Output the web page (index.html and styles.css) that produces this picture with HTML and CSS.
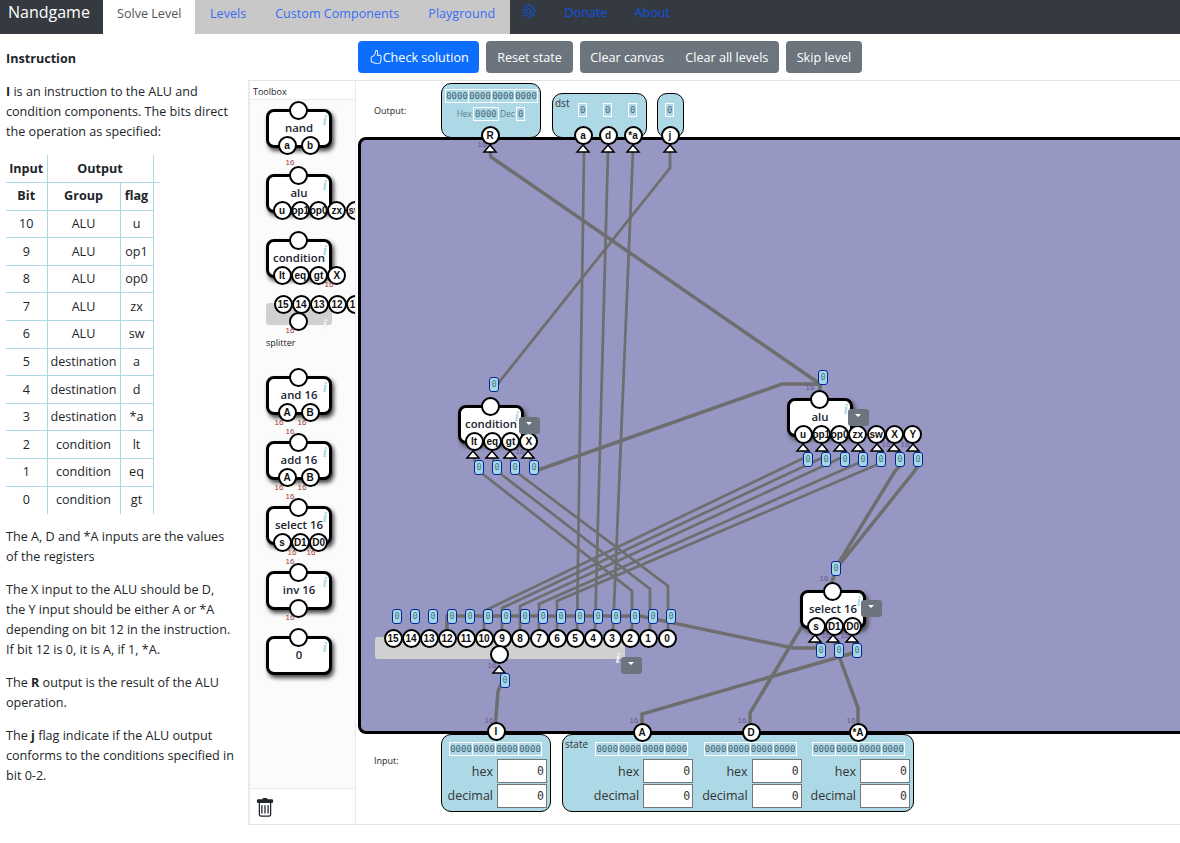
FILE: index.html
```html
<!DOCTYPE html>
<html lang="en">
<head>
    <meta charset="UTF-8">
    <title>Nandgame</title>
    <link rel="stylesheet" href="styles.css">
</head>
<body>
    <nav class="topbar">
        <a class="brand" href="#">Nandgame</a>
        <ul class="tabs">
            <li class="tab active"><a href="#">Solve Level</a></li>
            <li class="tab"><a href="#">Levels</a></li>
            <li class="tab"><a href="#">Custom Components</a></li>
            <li class="tab"><a href="#">Playground</a></li>
        </ul>
        <a class="navlink gear" href="#" aria-label="Settings">
            <svg viewBox="0 0 16 16" width="14" height="14" fill="currentColor">
                <path d="M8 4.754a3.246 3.246 0 1 0 0 6.492 3.246 3.246 0 0 0 0-6.492zM5.754 8a2.246 2.246 0 1 1 4.492 0 2.246 2.246 0 0 1-4.492 0z"/>
                <path d="M9.796 1.343c-.527-1.79-3.065-1.79-3.592 0l-.094.319a.873.873 0 0 1-1.255.52l-.292-.16c-1.64-.892-3.433.902-2.54 2.541l.159.292a.873.873 0 0 1-.52 1.255l-.319.094c-1.79.527-1.79 3.065 0 3.592l.319.094a.873.873 0 0 1 .52 1.255l-.16.292c-.892 1.64.901 3.434 2.541 2.54l.292-.159a.873.873 0 0 1 1.255.52l.094.319c.527 1.79 3.065 1.79 3.592 0l.094-.319a.873.873 0 0 1 1.255-.52l.292.16c1.64.893 3.434-.902 2.54-2.541l-.159-.292a.873.873 0 0 1 .52-1.255l.319-.094c1.79-.527 1.79-3.065 0-3.592l-.319-.094a.873.873 0 0 1-.52-1.255l.16-.292c.893-1.64-.902-3.433-2.541-2.54l-.292.159a.873.873 0 0 1-1.255-.52l-.094-.319zm-2.633.283c.246-.835 1.428-.835 1.674 0l.094.319a1.873 1.873 0 0 0 2.693 1.115l.291-.16c.764-.415 1.6.42 1.184 1.185l-.159.292a1.873 1.873 0 0 0 1.116 2.692l.318.094c.835.246.835 1.428 0 1.674l-.319.094a1.873 1.873 0 0 0-1.115 2.693l.16.291c.415.764-.42 1.6-1.185 1.184l-.291-.159a1.873 1.873 0 0 0-2.693 1.116l-.094.318c-.246.835-1.428.835-1.674 0l-.094-.319a1.873 1.873 0 0 0-2.692-1.115l-.292.16c-.764.415-1.6-.42-1.184-1.185l.159-.291A1.873 1.873 0 0 0 1.945 8.93l-.319-.094c-.835-.246-.835-1.428 0-1.674l.319-.094A1.873 1.873 0 0 0 3.06 4.377l-.16-.292c-.415-.764.42-1.6 1.185-1.184l.292.159a1.873 1.873 0 0 0 2.692-1.115l.094-.319z"/>
            </svg>
        </a>
        <a class="navlink" href="#">Donate</a>
        <a class="navlink" href="#">About</a>
    </nav>

    <main class="page">
        <aside class="instructions">
            <h1>Instruction</h1>
            <p><b>I</b> is an instruction to the ALU and condition components. The bits direct the operation as specified:</p>
            <table>
                <colgroup>
                    <col class="col-bit">
                    <col class="col-group">
                    <col class="col-flag">
                </colgroup>
                <thead>
                    <tr><th>Input</th><th colspan="2" class="output-head">Output</th></tr>
                    <tr><th>Bit</th><th>Group</th><th>flag</th></tr>
                </thead>
                <tbody>
                    <tr><td>10</td><td>ALU</td><td>u</td></tr>
                    <tr><td>9</td><td>ALU</td><td>op1</td></tr>
                    <tr><td>8</td><td>ALU</td><td>op0</td></tr>
                    <tr><td>7</td><td>ALU</td><td>zx</td></tr>
                    <tr><td>6</td><td>ALU</td><td>sw</td></tr>
                    <tr><td>5</td><td>destination</td><td>a</td></tr>
                    <tr><td>4</td><td>destination</td><td>d</td></tr>
                    <tr><td>3</td><td>destination</td><td>*a</td></tr>
                    <tr><td>2</td><td>condition</td><td>lt</td></tr>
                    <tr><td>1</td><td>condition</td><td>eq</td></tr>
                    <tr><td>0</td><td>condition</td><td>gt</td></tr>
                </tbody>
            </table>
            <p>The A, D and *A inputs are the values of the registers</p>
            <p>The X input to the ALU should be D, the Y input should be either A or *A depending on bit 12 in the instruction. If bit 12 is 0, it is A, if 1, *A.</p>
            <p>The <b>R</b> output is the result of the ALU operation.</p>
            <p>The <b>j</b> flag indicate if the ALU output conforms to the conditions specified in bit 0-2.</p>
        </aside>

        <section class="workspace">
            <div class="toolbar">
                <button class="btn primary">
                    <svg viewBox="0 0 16 16" width="14" height="14" fill="currentColor"><path d="M8.864.046C7.908-.193 7.02.53 6.956 1.466c-.072 1.051-.23 2.016-.428 2.59-.125.36-.479 1.013-1.04 1.639-.557.623-1.282 1.178-2.131 1.41C2.685 7.288 2 7.87 2 8.72v4.001c0 .845.682 1.464 1.448 1.545 1.07.114 1.564.415 2.068.723l.048.03c.272.165.578.348.97.484.397.136.861.217 1.466.217h3.5c.937 0 1.599-.477 1.934-1.064a1.86 1.86 0 0 0 .254-.912c0-.152-.023-.312-.077-.464.201-.263.38-.578.488-.901.11-.33.172-.762.004-1.149.069-.13.12-.269.159-.403.077-.27.113-.568.113-.857 0-.288-.036-.585-.113-.856a2.144 2.144 0 0 0-.138-.362 1.9 1.9 0 0 0 .234-1.734c-.206-.592-.682-1.1-1.2-1.272-.847-.282-1.803-.276-2.516-.211a9.84 9.84 0 0 0-.443.05 9.365 9.365 0 0 0-.062-4.509A1.38 1.38 0 0 0 9.125.111L8.864.046zM11.5 14.721H8c-.51 0-.863-.069-1.14-.164-.281-.097-.506-.228-.776-.393l-.04-.024c-.555-.339-1.198-.731-2.49-.868-.333-.036-.554-.29-.554-.55V8.72c0-.254.226-.543.62-.65 1.095-.3 1.977-.996 2.614-1.708.635-.71 1.064-1.475 1.238-1.978.243-.7.407-1.768.482-2.85.025-.362.36-.594.667-.518l.262.066c.16.04.258.143.288.255a8.34 8.34 0 0 1-.145 4.725.5.5 0 0 0 .595.644l.003-.001.014-.003.058-.014a8.908 8.908 0 0 1 1.036-.157c.663-.06 1.457-.054 2.11.164.175.058.45.3.57.65.107.308.087.67-.266 1.022l-.353.353.353.354c.043.043.105.141.154.315.048.167.075.37.075.581 0 .212-.027.414-.075.582-.05.174-.111.272-.154.315l-.353.353.353.354c.047.047.109.177.005.488a2.224 2.224 0 0 1-.505.805l-.353.353.353.354c.006.005.041.05.041.17a.866.866 0 0 1-.121.416c-.165.288-.503.56-1.066.56z"/></svg>Check solution
                </button>
                <button class="btn">Reset state</button>
                <div class="btn-group">
                    <button class="btn">Clear canvas</button>
                    <button class="btn">Clear all levels</button>
                </div>
                <button class="btn">Skip level</button>
            </div>

            <div class="editor">
                <div class="toolbox">
                    <div class="toolbox-title">Toolbox</div>
                    <div class="toolbox-list" id="toolbox-list"></div>
                    <div class="trash">
                        <svg viewBox="0 0 16 16" width="20" height="20" fill="currentColor">
                            <path d="M5.5 5.5A.5.5 0 0 1 6 6v6a.5.5 0 0 1-1 0V6a.5.5 0 0 1 .5-.5zm2.5 0a.5.5 0 0 1 .5.5v6a.5.5 0 0 1-1 0V6a.5.5 0 0 1 .5-.5zm3 .5a.5.5 0 0 0-1 0v6a.5.5 0 0 0 1 0V6z"/>
                            <path d="M14.5 3a1 1 0 0 1-1 1H13v9a2 2 0 0 1-2 2H5a2 2 0 0 1-2-2V4h-.5a1 1 0 0 1-1-1V2a1 1 0 0 1 1-1H6a1 1 0 0 1 1-1h2a1 1 0 0 1 1 1h3.5a1 1 0 0 1 1 1v1zM4.118 4 4 4.059V13a1 1 0 0 0 1 1h6a1 1 0 0 0 1-1V4.059L11.882 4H4.118zM2.5 3V2h11v1h-11z"/>
                        </svg>
                    </div>
                </div>

                <div class="canvas" id="canvas">
                    <div class="panel"></div>
                    <svg class="wires" id="wires" viewBox="356 80 824 745" width="824" height="745">
                        <g class="wire thick">
                            <polyline points="490,150 491,156 820,383 820,392"/>
                            <polyline points="538,469 782,383 820,383"/>
                            <polyline points="447,630 447,615 640,615 793,647 821,647"/>
                            <polyline points="838,563 831,584"/>
                            <polyline points="900,465 895,470 838,563"/>
                            <polyline points="918,465 913,472 840,563"/>
                            <polyline points="839,655 858,707 858,728"/>
                            <polyline points="857,650 853,652 642,713 642,728"/>
                            <polyline points="810,612 750,712 750,728"/>
                            <polyline points="495,728 498,690 505,675"/>
                        </g>
                        <g class="wire">
                            <polyline points="584,150 577,630"/>
                            <polyline points="608,150 595,630"/>
                            <polyline points="633,150 613,630"/>
                            <polyline points="670,150 670,167 500,380 494,390"/>
                            <polyline points="484,630 484,610 808,455"/>
                            <polyline points="502,630 502,607 826,455"/>
                            <polyline points="520,630 520,605 845,455"/>
                            <polyline points="539,630 539,603 863,460"/>
                            <polyline points="557,630 557,600 881,462"/>
                            <polyline points="473,455 479,470 632,590 632,630"/>
                            <polyline points="492,455 497,470 650,588 650,630"/>
                            <polyline points="510,455 515,470 668,585 668,630"/>
                            <polyline points="528,455 534,462"/>
                            <polyline points="803,448 808,455"/>
                            <polyline points="822,448 826,455"/>
                            <polyline points="840,448 845,455"/>
                            <polyline points="858,448 863,455"/>
                            <polyline points="877,448 881,455"/>
                            <polyline points="894,448 900,455"/>
                            <polyline points="913,448 918,455"/>
                            <polyline points="815,640 821,647"/>
                            <polyline points="833,640 839,647"/>
                            <polyline points="852,640 857,647"/>
                        </g>
                    </svg>

                    <div class="io-label output-label">Output:</div>
                    <div class="io-label input-label">Input:</div>

                    <div class="box box-r">
                        <div class="bits"><span>0000</span><span>0000</span><span>0000</span><span>0000</span></div>
                        <div class="readout">Hex <span class="mono">0000</span> Dec <span class="mono">0</span></div>
                    </div>
                    <div class="box box-dst">
                        <span class="box-name">dst</span>
                        <span class="mono dst-a">0</span>
                        <span class="mono dst-d">0</span>
                        <span class="mono dst-sa">0</span>
                    </div>
                    <div class="box box-j"><span class="mono">0</span></div>

                    <div class="box box-i">
                        <div class="register">
                            <div class="bits"><span>0000</span><span>0000</span><span>0000</span><span>0000</span></div>
                            <label class="field">hex <input value="0"></label>
                            <label class="field">decimal <input value="0"></label>
                        </div>
                    </div>
                    <div class="box box-state">
                        <span class="box-name">state</span>
                        <div class="register">
                            <div class="bits"><span>0000</span><span>0000</span><span>0000</span><span>0000</span></div>
                            <label class="field">hex <input value="0"></label>
                            <label class="field">decimal <input value="0"></label>
                        </div>
                        <div class="register">
                            <div class="bits"><span>0000</span><span>0000</span><span>0000</span><span>0000</span></div>
                            <label class="field">hex <input value="0"></label>
                            <label class="field">decimal <input value="0"></label>
                        </div>
                        <div class="register">
                            <div class="bits"><span>0000</span><span>0000</span><span>0000</span><span>0000</span></div>
                            <label class="field">hex <input value="0"></label>
                            <label class="field">decimal <input value="0"></label>
                        </div>
                    </div>
                </div>
            </div>
        </section>
    </main>

    <script src="script.js"></script>
</body>
</html>
```

FILE: styles.css
```css
* {
    box-sizing: border-box;
}
body {
    margin: 0;
    font-family: "Open Sans", "Liberation Sans", sans-serif;
    font-size: 12.6px;
    color: #212529;
    background: #fff;
}
a {
    text-decoration: none;
}

/* top bar */
.topbar {
    display: flex;
    align-items: flex-start;
    height: 34px;
    background: #343a40;
}
.brand {
    width: 103px;
    padding-left: 8px;
    font-size: 16px;
    line-height: 25px;
    color: #fff;
}
.tabs {
    display: flex;
    margin: 0;
    padding: 0;
    list-style: none;
    background: #c8c8c8;
}
.tab a {
    display: block;
    height: 34px;
    padding: 0 14.5px;
    line-height: 27px;
    color: #3a6cf4;
}
.tab.active a {
    padding: 0 14px;
    background: #fff;
    color: #555;
}
.navlink {
    margin-left: 27px;
    line-height: 26px;
    color: #0d52e0;
}
.navlink.gear {
    display: block;
    height: 14px;
    margin-top: 4px;
    margin-left: 12px;
    margin-right: 2px;
    line-height: 14px;
}

/* instructions */
.page {
    display: grid;
    grid-template-columns: 248px 1fr;
}
.instructions {
    padding: 17px 12px 0 6px;
    line-height: 20px;
}
.instructions h1 {
    margin: 0 0 15px;
    font-size: 12.6px;
    font-weight: 700;
    line-height: 16px;
}
.instructions p {
    margin: 0 0 13px;
}
.instructions table {
    border-collapse: collapse;
    margin-bottom: 13px;
    width: 147px;
    table-layout: fixed;
}
.col-bit {
    width: 41px;
}
.col-group {
    width: 73px;
}
.col-flag {
    width: 33px;
}
.instructions th,
.instructions td {
    height: 27.6px;
    padding: 0;
    text-align: center;
    border: 1px solid #add8e6;
}
.instructions th:first-child,
.instructions td:first-child {
    border-left: 0;
}
.instructions tr:first-child th {
    border-top: 0;
}
.instructions tbody tr:last-child td {
    border-bottom: 0;
}
.output-head {
    position: relative;
}
.output-head::after {
    content: "";
    position: absolute;
    left: 100%;
    bottom: -1px;
    width: 7px;
    height: 1px;
    background: #add8e6;
}

/* workspace */
.toolbar {
    display: flex;
    gap: 7px;
    height: 46px;
    padding: 7px 0 0 110px;
}
.btn {
    height: 32px;
    padding: 0 10.7px;
    border: 0;
    border-radius: 4px;
    font: inherit;
    color: #fff;
    background: #6c757d;
}
.btn.primary {
    display: flex;
    align-items: center;
    background: #0d6efd;
}
.btn-group {
    display: flex;
}
.btn-group .btn:first-child {
    border-radius: 4px 0 0 4px;
}
.btn-group .btn:last-child {
    border-radius: 0 4px 4px 0;
}
.editor {
    display: flex;
    height: 745px;
    border-top: 1px solid #e4e4e4;
    border-bottom: 1px solid #e4e4e4;
}

/* toolbox */
.toolbox {
    display: flex;
    flex-direction: column;
    flex: none;
    width: 108px;
    border-left: 2px solid #ebebeb;
    border-right: 1px solid #ebebeb;
    background: #fbfbfb;
    overflow: hidden;
}
.toolbox-title {
    height: 19px;
    padding-left: 3px;
    font-size: 9px;
    line-height: 21px;
    background: #fff;
    border-bottom: 1px solid #ebebeb;
}
.toolbox-list {
    flex: 1;
    padding: 9px 0 0 16px;
}
.tool {
    height: 65px;
}
.tool.splitter-tool {
    height: 73px;
    margin-top: -1px;
}
.caption {
    margin-top: 12px;
    font-size: 9px;
    line-height: 12px;
}
.trash {
    height: 36px;
    padding: 9px 0 0 5px;
    background: #fff;
    border-top: 1px solid #ebebeb;
}

/* nodes */
.node {
    position: relative;
    width: 66px;
    height: 39px;
    border: 3px solid #000;
    border-radius: 8px;
    background: #fff;
    box-shadow: 2px 3px 4px #444;
    text-align: center;
    font-size: 11.4px;
    font-weight: 600;
    line-height: 31px;
    color: #1c2430;
}
.node.splitter {
    height: 22px;
    border: 0;
    border-radius: 3px;
    background: #d0d0d0;
    box-shadow: none;
}
.node.placed {
    position: absolute;
}
.info {
    position: absolute;
    top: 1px;
    right: 2px;
    font: italic bold 15px/14px "Liberation Serif", serif;
    color: #add8e6;
}
.node.splitter .info {
    top: auto;
    right: 5px;
    bottom: -6px;
    color: #f2f2f2;
}
.pin {
    position: absolute;
    width: 19px;
    height: 19px;
    margin: -9.5px 0 0 -9.5px;
    border: 2px solid #000;
    border-radius: 50%;
    background: #fff;
    text-align: center;
    font: bold 10px/15px "Liberation Sans", sans-serif;
    color: #111;
    white-space: nowrap;
}
/* pin names stick out of the circle and stay readable over the next pin */
.pin span {
    position: relative;
    z-index: 2;
    margin: 0 -6px;
}
.bus {
    position: absolute;
    z-index: 3;
    transform: translate(-50%, -50%);
    font: 8px/8px "Liberation Sans", sans-serif;
    color: #a03a3a;
}
.canvas .bus {
    color: #6d5689;
}
.value {
    position: absolute;
    z-index: 3;
    width: 10px;
    height: 15px;
    margin: -7.5px 0 0 -5px;
    border: 1px solid #0a1f9c;
    border-radius: 3px;
    background: #a3d9e6;
    text-align: center;
    font: 8.5px/13px "DejaVu Sans Mono", monospace;
    color: #4c7484;
}
.drop {
    position: absolute;
    z-index: 4;
    width: 21px;
    height: 17px;
    border-radius: 3px;
    background: #6c757d;
}
.drop::after {
    content: "";
    position: absolute;
    left: 7px;
    top: 5px;
    border: 3.5px solid transparent;
    border-top: 3.5px solid #fff;
}

/* canvas */
.canvas {
    position: relative;
    flex: 1;
    overflow: hidden;
}
.panel {
    position: absolute;
    left: 2px;
    top: 56px;
    width: 840px;
    height: 597px;
    border: 3px solid #000;
    border-radius: 8px;
    background: #9797c3;
}
.wires {
    position: absolute;
    left: 0;
    top: 0;
}
.wire {
    fill: none;
    stroke: #6e6e6e;
    stroke-width: 2.7;
}
.wire.thick {
    stroke-width: 3.5;
}
.wires .tri {
    fill: #fff;
    stroke: #000;
    stroke-width: 1.5;
}
.io-label {
    position: absolute;
    left: 18px;
    font-size: 9px;
}
.output-label {
    top: 23px;
}
.input-label {
    top: 673px;
}
.box {
    position: absolute;
    border: 1.5px solid #000;
    border-radius: 10px;
    background: #add8e6;
    color: #333;
}
.box-name {
    position: absolute;
    left: 2px;
    top: 2px;
    font-size: 10px;
    line-height: 14px;
}
.mono {
    display: inline-block;
    height: 14px;
    padding: 0 1px;
    border: 1px solid #fff;
    font: 9px/12px "DejaVu Sans Mono", monospace;
    color: #4c6a78;
}
.bits {
    display: flex;
    width: 93px;
    border: 1px solid #fff;
}
.bits span {
    flex: 1;
    border-right: 1px solid #fff;
    text-align: center;
    font: 9px/12px "DejaVu Sans Mono", monospace;
    color: #46626f;
}
.bits span:last-child {
    border-right: 0;
}
.readout {
    margin-top: 4px;
    text-align: center;
    font-size: 8.4px;
    line-height: 14px;
    word-spacing: -1px;
    color: #5c7c90;
}
.box-r {
    left: 85px;
    top: 2px;
    width: 100px;
    height: 55px;
    padding: 5px 3px;
}
.box-dst {
    left: 196px;
    top: 12px;
    width: 95px;
    height: 45px;
}
.box-dst .mono,
.box-j .mono {
    position: absolute;
    top: 9px;
}
.dst-a {
    left: 25px;
}
.dst-d {
    left: 50px;
}
.dst-sa {
    left: 75px;
}
.box-j {
    left: 301px;
    top: 12px;
    width: 27px;
    height: 45px;
}
.box-j .mono {
    left: 7px;
}
.box-i,
.box-state {
    display: flex;
    justify-content: flex-end;
    top: 653px;
    height: 78px;
    padding: 7px 3px 0 0;
}
.box-i {
    left: 85px;
    width: 110px;
}
.box-state {
    left: 206px;
    width: 352px;
}
.register {
    display: flex;
    flex-direction: column;
    align-items: flex-end;
    flex: none;
    width: 108.4px;
}
.register .bits {
    margin: 0 5px 3px 0;
}
.field {
    display: flex;
    align-items: center;
    justify-content: flex-end;
    gap: 4px;
    height: 24.5px;
    font-size: 12.5px;
}
.field input {
    width: 50px;
    height: 24px;
    padding: 0 2px;
    border: 1px solid #767676;
    background: #fff;
    text-align: right;
    font: 11.5px "DejaVu Sans Mono", monospace;
    color: #333;
}
```

FILE: script.js
```js
// canvas coordinates below are taken from the page, this is the canvas corner
const OX = 356;
const OY = 81;
const SVG_NS = 'http://www.w3.org/2000/svg';

function make(cls, text) {
    const el = document.createElement('div');
    el.className = cls;
    if (text !== undefined) el.textContent = text;
    return el;
}

function place(el, x, y) {
    el.style.left = x + 'px';
    el.style.top = y + 'px';
    return el;
}

function makePin(name) {
    const pin = make('pin');
    if (name) {
        const label = document.createElement('span');
        label.textContent = name;
        pin.appendChild(label);
    }
    return pin;
}

// input pins sit along the bottom edge of the box
function pinX(count, i) {
    if (count <= 2) return [18, 41][i];
    return 13 + i * 18.3;
}

function addNode(parent, opts) {
    const node = make('node' + (opts.cls ? ' ' + opts.cls : ''));
    node.append(opts.label || '');
    node.appendChild(make('info', 'i'));
    if (opts.out !== false) node.appendChild(place(makePin(), 29, -2));
    (opts.inputs || []).forEach(function(name, i) {
        node.appendChild(place(makePin(name), pinX(opts.inputs.length, i), 33));
    });
    if (opts.bottom) node.appendChild(place(makePin(), 29, 34));
    (opts.bus || []).forEach(function(b) {
        node.appendChild(place(make('bus', '16'), b[0] - 3, b[1] - 3));
    });
    parent.appendChild(node);
    return node;
}

function addSplitter(parent) {
    const node = make('node splitter');
    node.appendChild(make('info', 'i'));
    ['15', '14', '13', '12', '11'].forEach(function(name, i) {
        node.appendChild(place(makePin(name), 17 + i * 18, 1));
    });
    node.appendChild(place(makePin(), 32, 18));
    node.appendChild(place(make('bus', '16'), 24, 28));
    parent.appendChild(node);
}

const TOOLS = [
    { label: 'nand', inputs: ['a', 'b'] },
    { label: 'alu', inputs: ['u', 'op1', 'op0', 'zx', 'sw'], bus: [[24, -11]] },
    { label: 'condition', inputs: ['lt', 'eq', 'gt', 'X'], bus: [[63, 46]] },
    { splitter: true },
    { label: 'and 16', inputs: ['A', 'B'], bus: [[13, 47], [36, 47]] },
    { label: 'add 16', inputs: ['A', 'B'], bus: [[24, -9], [13, 47], [36, 47]] },
    { label: 'select 16', inputs: ['s', 'D1', 'D0'], bus: [[24, -9], [26, 47], [45, 47]] },
    { label: 'inv 16', bottom: true, bus: [[24, -9], [24, 47]] },
    { label: '0' }
];

const list = document.getElementById('toolbox-list');
TOOLS.forEach(function(tool) {
    if (tool.splitter) {
        const wrap = make('tool splitter-tool');
        addSplitter(wrap);
        wrap.appendChild(make('caption', 'splitter'));
        list.appendChild(wrap);
        return;
    }
    const wrap = make('tool');
    addNode(wrap, tool);
    list.appendChild(wrap);
});

// the circuit itself
const canvas = document.getElementById('canvas');
const wires = document.getElementById('wires');

function canvasPin(x, y, name) {
    canvas.appendChild(place(makePin(name), x - OX, y - OY));
}

function placeNode(x, y, opts) {
    opts.cls = 'placed';
    place(addNode(canvas, opts), x - OX, y - OY);
}

function drop(x, y) {
    canvas.appendChild(place(make('drop'), x - OX, y - OY));
}

function triangle(x, tip) {
    const tri = document.createElementNS(SVG_NS, 'polygon');
    tri.setAttribute('class', 'tri');
    tri.setAttribute('points', [x, tip, x - 6, tip + 7, x + 6, tip + 7].join(' '));
    wires.appendChild(tri);
}

function value(x, y) {
    canvas.appendChild(place(make('value', '0'), x - OX, y - OY));
}

function bus(x, y) {
    canvas.appendChild(place(make('bus', '16'), x - OX, y - OY));
}

[490, 583, 608, 633, 670].forEach(function(x) { triangle(x, 144); });
[473, 492, 510, 528].forEach(function(x) { triangle(x, 450); });
[803, 822, 840, 858, 877, 894, 913].forEach(function(x) { triangle(x, 443); });
[815, 833, 852].forEach(function(x) { triangle(x, 634); });
triangle(499, 665);

placeNode(458, 405, { label: 'condition', inputs: ['lt', 'eq', 'gt', 'X'] });
placeNode(787, 398, { label: 'alu', inputs: ['u', 'op1', 'op0', 'zx', 'sw', 'X', 'Y'] });
placeNode(800, 590, { label: 'select 16', inputs: ['s', 'D1', 'D0'] });

const bar = make('node splitter placed');
bar.style.width = '250px';
bar.appendChild(make('info', 'i'));
place(bar, 375 - OX, 637 - OY);
canvas.appendChild(bar);

const BIT_X = [393, 411, 429, 447, 466, 484, 502, 520, 539, 557, 575, 593, 612, 630, 648, 667];
BIT_X.forEach(function(x, i) { canvasPin(x, 638, String(15 - i)); });
canvasPin(499, 654);

canvasPin(490, 135, 'R');
canvasPin(583, 135, 'a');
canvasPin(608, 135, 'd');
canvasPin(633, 135, '*a');
canvasPin(670, 135, 'j');
canvasPin(496, 731, 'I');
canvasPin(642, 732, 'A');
canvasPin(751, 732, 'D');
canvasPin(858, 732, '*A');

drop(519, 417);
drop(848, 409);
drop(861, 600);
drop(621, 657);

[397, 415, 433, 452, 470, 488, 506, 525, 543, 561, 580, 598, 616, 635, 653, 671].forEach(function(x) {
    value(x, 616);
});
[479, 497, 515, 534].forEach(function(x) { value(x, 467); });
[808, 826, 845, 863, 881, 900, 918].forEach(function(x) { value(x, 459); });
[821, 839, 857].forEach(function(x) { value(x, 650); });
value(494, 384);
value(823, 377);
value(836, 568);
value(505, 680);

[[482, 145], [810, 388], [886, 445], [905, 445], [520, 452], [824, 579], [826, 636], [845, 636],
 [492, 666], [489, 721], [634, 721], [742, 721], [851, 721]].forEach(function(b) {
    bus(b[0], b[1]);
});
```
